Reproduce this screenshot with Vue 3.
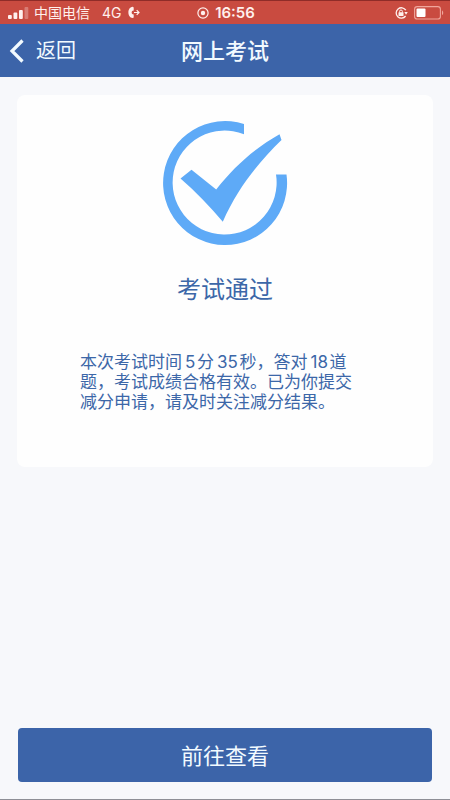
<script setup>
const result = { minutes: 5, seconds: 35, correct: 18 }

// A thin space before and a hair space after set the figures apart from the Chinese text.
const figure = (n) => `\u2009${n}\u200A`
const summary =
  `本次考试时间${figure(result.minutes)}分${figure(result.seconds)}秒，` +
  `答对${figure(result.correct)}道题，考试成绩合格有效。` +
  '已为你提交减分申请，请及时关注减分结果。'
</script>

<template>
  <div class="page">
    <div class="status">
      <div class="side">
        <svg class="signal" width="21" height="12" viewBox="0 0 21 12" aria-hidden="true">
          <rect x="0" y="8" width="3.8" height="4" rx="1" />
          <rect x="5.5" y="5.5" width="3.8" height="6.5" rx="1" />
          <rect x="11" y="3" width="3.8" height="9" rx="1" />
          <rect x="16.5" y="0" width="3.8" height="12" rx="1" opacity=".3" />
        </svg>
        <span class="carrier">中国电信</span>
        <span class="network">4G</span>
        <svg width="12" height="13" viewBox="0 0 12 13" aria-hidden="true">
          <path d="M4.8.8C1.5 1.2.4 4 .4 6.5s1.1 5.2 4.4 5.6l.9-.6V8.6L4 8C3.5 7 3.5 6 4 5l1.7-.6V1.4z" />
          <path d="M6 6.5h4.8M8.7 4.2l2.3 2.3-2.3 2.3" fill="none" stroke="#fff0ed" stroke-width="1.2" />
        </svg>
      </div>
      <div class="clock">
        <svg width="12" height="12" viewBox="0 0 12 12" aria-hidden="true">
          <circle cx="6" cy="6" r="5.1" fill="none" stroke="#fff0ed" stroke-width="1.2" />
          <circle cx="6" cy="6" r="2.2" />
        </svg>
        <time>16:56</time>
      </div>
      <div class="side end">
        <svg width="13" height="12" viewBox="0 0 13 12" aria-hidden="true">
          <path d="M10.8 3.2A5.2 5.2 0 1 0 10.6 9" fill="none" stroke="#fff0ed" stroke-width="1.3" />
          <path d="M9.3 5h3.5L11 7.7z" />
          <rect x="3.5" y="5.3" width="5" height="3.6" rx=".5" />
          <path d="M4.6 5.6V4.4a1.4 1.4 0 0 1 2.8 0v1.2" fill="none" stroke="#fff0ed" />
        </svg>
        <svg width="30" height="14" viewBox="0 0 30 14" aria-hidden="true">
          <rect x=".6" y=".6" width="25.8" height="12.4" rx="2.6" fill="none" stroke="#f0a69c" stroke-width="1.1" />
          <rect x="2.5" y="2.5" width="9" height="8.6" rx="1" fill="#fff" />
          <path d="M28 4.5c1.6.6 1.6 4 0 4.6z" fill="#f0a69c" />
        </svg>
      </div>
    </div>

    <header class="nav">
      <button class="back" type="button">
        <svg width="16" height="26" viewBox="0 0 16 26" aria-hidden="true">
          <path d="M13.5 2.5 3 13l10.5 10.5" fill="none" stroke="#f2faff" stroke-width="3.2" />
        </svg>
        返回
      </button>
      <h1>网上考试</h1>
    </header>

    <main class="content">
      <section class="card">
        <svg class="passed" width="126" height="126" viewBox=".5 0 126 126" aria-hidden="true">
          <path d="M82.5 4A62 62 0 1 0 125 54.5H114.5A52 52 0 1 1 82.5 14.3Z" />
          <path d="M18.5 58.6 29.5 49.8 54.2 69.6C71.5 47 93 28 117.5 14.2L119.5 20C97 42 76 67 60.8 101.8 48 87 34 72 18.5 58.6Z" transform="translate(.5 0)" />
        </svg>
        <h2>考试通过</h2>
        <p>{{ summary }}</p>
      </section>
    </main>

    <footer class="actions">
      <button class="view" type="button">前往查看</button>
    </footer>
  </div>
</template>

<style>
body {
  margin: 0;
  background: #f7f8fb;
}
</style>

<style scoped>
.page {
  box-sizing: border-box;
  display: flex;
  flex-direction: column;
  min-height: 100vh;
  border-bottom: 1px solid #8e8f96;
  background: #f7f8fb;
  font-family: Inter, "Noto Sans CJK SC", sans-serif;
}
svg {
  display: block;
  flex: none;
}
.status {
  box-sizing: border-box;
  display: grid;
  grid-template-columns: 1fr auto 1fr;
  align-items: center;
  height: 24px;
  padding: 0 6px 0 8px;
  border-top: 1px solid #8f2c28;
  background: #c94b40;
  color: #fff0ed;
  fill: #fff0ed;
  font-size: 14px;
  line-height: 20px;
}
.side {
  display: flex;
  align-items: center;
}
.carrier {
  margin: 0 12px 0 5px;
}
.network {
  margin-right: 6px;
}
.end {
  justify-content: flex-end;
  gap: 6px;
}
.clock {
  display: flex;
  align-items: center;
  gap: 6px;
  font-size: 15px;
  font-weight: 600;
}
.nav {
  display: grid;
  grid-template-columns: 1fr auto 1fr;
  align-items: center;
  height: 53px;
  padding: 0 9px;
  background: #3c64a9;
  color: #f2faff;
}
.back {
  display: flex;
  align-items: center;
  justify-self: start;
  gap: 11px;
  padding: 0;
  border: 0;
  background: none;
  color: inherit;
  font: inherit;
  font-size: 20px;
  line-height: 28px;
}
h1 {
  margin: 0;
  font-size: 22px;
  font-weight: 500;
  line-height: 32px;
}
.content {
  flex: 1;
  padding: 18px 17px;
}
.card {
  display: flex;
  flex-direction: column;
  align-items: center;
  padding: 25px 60px 55px;
  border-radius: 8px;
  background: #fefefe;
  color: #3c67a8;
}
.passed {
  fill: #5eaaf7;
}
h2 {
  margin: 26px 0 44px;
  font-size: 24px;
  font-weight: 400;
  line-height: 36px;
}
p {
  align-self: stretch;
  margin: 0;
  padding: 0 16px 0 3px;
  font-size: 17px;
  line-height: 20px;
}
.actions {
  padding: 0 18px 17px;
}
.view {
  display: block;
  width: 100%;
  height: 54px;
  padding: 0 0 3px;
  border: 0;
  border-radius: 4px;
  background: #3c64a9;
  color: #f2faff;
  font: inherit;
  font-size: 22px;
}
</style>
